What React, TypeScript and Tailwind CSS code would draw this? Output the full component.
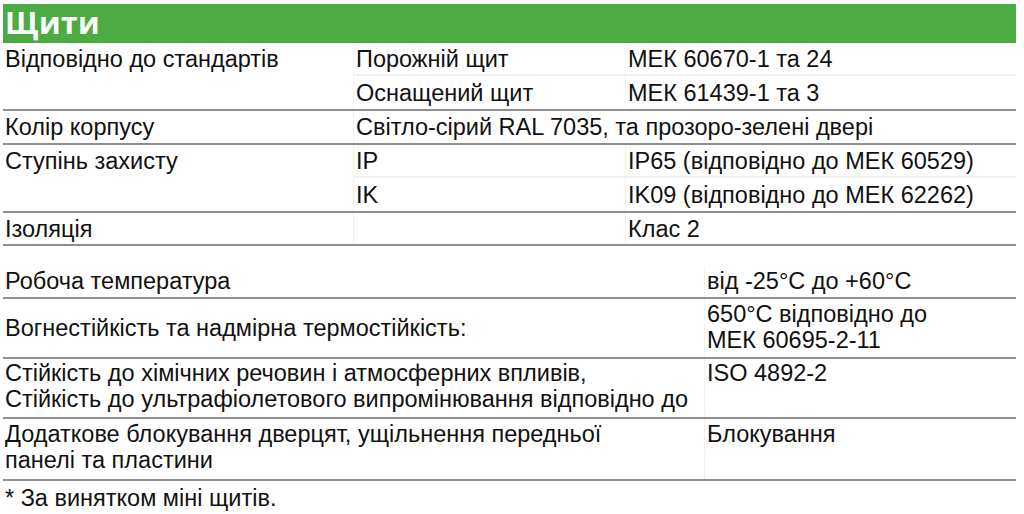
import React from 'react';

const line = 'border-b-2 border-[#8e8e8e]';
const sep = 'border-l border-[#f2f2f2]';

type Sub = { mid: string; right: string };

const topGroups: { label: string; subs?: Sub[]; span?: string; right?: string }[] = [
  {
    label: 'Відповідно до стандартів',
    subs: [
      { mid: 'Порожній щит', right: 'МЕК 60670-1 та 24' },
      { mid: 'Оснащений щит', right: 'МЕК 61439-1 та 3' },
    ],
  },
  { label: 'Колір корпусу', span: 'Світло-сірий RAL 7035, та прозоро-зелені двері' },
  {
    label: 'Ступінь захисту',
    subs: [
      { mid: 'IP', right: 'IP65 (відповідно до МЕК 60529)' },
      { mid: 'IK', right: 'IK09 (відповідно до МЕК 62262)' },
    ],
  },
  { label: 'Ізоляція', right: 'Клас 2' },
];

const bottomRows = [
  { left: ['Робоча температура'], right: ['від -25°C до +60°C'], h: 'h-[33px]', pt: 'pt-[2px]' },
  {
    left: ['Вогнестійкість та надмірна термостійкість:'],
    right: ['650°C відповідно до', 'МЕК 60695-2-11'],
    h: 'h-[60px]',
    pt: 'pt-[2px]',
    leftCenter: true,
  },
  {
    left: ['Стійкість до хімічних речовин і атмосферних впливів,', 'Стійкість до ультрафіолетового випромінювання відповідно до'],
    right: ['ISO 4892-2'],
    h: 'h-[60px]',
    pt: 'pt-[1px]',
  },
  {
    left: ['Додаткове блокування дверцят, ущільнення передньої', 'панелі та пластини'],
    right: ['Блокування'],
    h: 'h-[62px]',
    pt: 'pt-[2px]',
  },
];

export default function App() {
  return (
    <div className="w-[1024px] h-[514px] bg-white overflow-hidden text-[#111] font-['Liberation_Sans',Arial,sans-serif] text-[23.5px] leading-[26px]">
      <div className="ml-[3px] mt-[4px] w-[1013px]">
        <div className="h-[39px] bg-[#4dab43] flex items-center pl-[2px]">
          <h1 className="text-white font-bold text-[30px] leading-none font-['Open_Sans',sans-serif] tracking-[0.5px] -mt-[2px]">
            Щити
          </h1>
        </div>

        {topGroups.map((g) => (
          <div key={g.label} className={`flex ${line}`}>
            <div className="w-[350px] shrink-0 pl-[2px] h-[31px] flex items-center">{g.label}</div>
            {g.subs && (
              <div className="flex-1 flex flex-col">
                {g.subs.map((s, i) => (
                  <div key={s.mid} className={`flex h-[33px] items-center ${i === 0 ? line : ''} ${sep}`}>
                    <div className="w-[271px] shrink-0 pl-[2px]">{s.mid}</div>
                    <div className={`flex-1 h-full flex items-center pl-[2px] ${sep}`}>{s.right}</div>
                  </div>
                ))}
              </div>
            )}
            {g.span && (
              <div className={`flex-1 h-[32px] flex items-center pl-[2px] ${sep}`}>{g.span}</div>
            )}
            {g.right && (
              <div className={`flex-1 flex h-[31px] ${sep}`}>
                <div className="w-[271px] shrink-0" />
                <div className={`flex-1 flex items-center pl-[2px] ${sep}`}>{g.right}</div>
              </div>
            )}
          </div>
        ))}

        <div className="mt-[20px]">
          {bottomRows.map((r) => (
            <div key={r.left[0]} className={`flex ${r.h} ${line}`}>
              <div
                className={`w-[701px] shrink-0 pl-[2px] flex flex-col ${
                  r.leftCenter ? 'justify-center' : r.pt
                }`}
              >
                {r.left.map((t) => (
                  <div key={t}>{t}</div>
                ))}
              </div>
              <div className={`flex-1 pl-[2px] flex flex-col ${sep} ${r.pt}`}>
                {r.right.map((t) => (
                  <div key={t}>{t}</div>
                ))}
              </div>
            </div>
          ))}
        </div>

        <div className="pl-[2px] mt-[4px]">* За винятком міні щитів.</div>
      </div>
    </div>
  );
}
